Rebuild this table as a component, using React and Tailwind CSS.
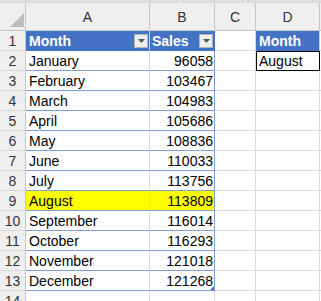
import React from 'react'

const months = [
  ['January', 96058],
  ['February', 103467],
  ['March', 104983],
  ['April', 105686],
  ['May', 108836],
  ['June', 110033],
  ['July', 113756],
  ['August', 113809],
  ['September', 116014],
  ['October', 116293],
  ['November', 121018],
  ['December', 121268],
]

function Dropdown() {
  return (
    <span className="ml-auto mr-[1px] w-[14px] h-[14px] bg-[#eeeeee] border border-[#b4b4b4] flex items-center justify-center">
      <svg width="7" height="4" viewBox="0 0 7 4">
        <path d="M0 0h7L3.5 4z" fill="#595959" />
      </svg>
    </span>
  )
}

function RowHead({ n }) {
  return (
    <div className="w-[26px] shrink-0 bg-[#efefef] border-r border-b border-r-[#c6c6c6] border-b-[#d8d8d8] flex items-center justify-center text-[#333]">
      {n}
    </div>
  )
}

function Gap({ w }) {
  return <div className={`${w} shrink-0 border-r border-b border-[#dadada]`} />
}

export default function App() {
  return (
    <div className="w-[321px] h-[301px] overflow-hidden bg-white text-[14px] leading-none text-black font-['Liberation_Sans',Arial,sans-serif]">
      <div className="h-[3px] bg-[#dcdcdc] flex">
        <div className="w-[180px] border-r border-[#f4f4f4]" />
        <div className="w-[66px] border-r border-[#f4f4f4]" />
      </div>

      <div className="flex h-[28px] bg-[#efefef] text-[#333]">
        <div className="w-[26px] shrink-0 border-r border-b border-[#c6c6c6] flex items-end justify-end pr-[1px] pb-[3px]">
          <svg width="14" height="14" viewBox="0 0 14 14">
            <path d="M14 0V14H0z" fill="#bdbdbd" />
          </svg>
        </div>
        <div className="w-[124px] shrink-0 border-r border-b border-[#c6c6c6] flex items-center justify-center">A</div>
        <div className="w-[65px] shrink-0 border-r border-b border-[#c6c6c6] flex items-center justify-center">B</div>
        <div className="w-[41px] shrink-0 border-r border-b border-[#c6c6c6] flex items-center justify-center">C</div>
        <div className="w-[64px] shrink-0 border-r border-b border-[#c6c6c6] flex items-center justify-center">D</div>
        <div className="flex-1 border-b border-[#c6c6c6]" />
      </div>

      <div className="flex h-[20px]">
        <RowHead n={1} />
        <div className="w-[124px] shrink-0 bg-[#4472c4] border-r border-b border-r-[#c3cfe6] border-b-[#4472c4] flex items-center pl-[3px] text-white font-bold">
          Month
          <Dropdown />
        </div>
        <div className="w-[65px] shrink-0 bg-[#4472c4] border-r border-b border-[#4472c4] flex items-center pl-[2px] text-white font-bold">
          Sales
          <Dropdown />
        </div>
        <Gap w="w-[41px]" />
        <div className="w-[64px] shrink-0 bg-[#4472c4] border-r border-b border-r-[#c3cfe6] border-b-[#4472c4] flex items-center pl-[3px] text-white font-bold">
          Month
        </div>
        <div className="flex-1 border-b border-[#dadada]" />
      </div>

      {months.map(([m, v], i) => {
        const hi = m === 'August'
        const last = i === months.length - 1
        return (
          <div key={m} className="flex h-[20px]">
            <RowHead n={i + 2} />
            <div className={`w-[124px] shrink-0 border-r border-b border-r-[#dadada] border-b-[#7f9fd6] flex items-center pl-[3px] ${hi ? 'bg-[#ffff00]' : ''}`}>
              {m}
            </div>
            <div className={`relative w-[65px] shrink-0 border-r border-b border-[#7f9fd6] flex items-center justify-end pr-[1px] ${hi ? 'bg-[#ffff00]' : ''}`}>
              {v}
              {last && (
                <svg className="absolute right-0 bottom-0" width="4" height="4" viewBox="0 0 4 4">
                  <path d="M4 0V4H0z" fill="#4472c4" />
                </svg>
              )}
            </div>
            <Gap w="w-[41px]" />
            {i === 0 ? (
              <div className="w-[64px] shrink-0 border-r border-b border-black outline outline-1 outline-black -outline-offset-1 flex items-center pl-[3px]">
                August
              </div>
            ) : (
              <Gap w="w-[64px]" />
            )}
            <div className="flex-1 border-b border-[#dadada]" />
          </div>
        )
      })}

      <div className="flex h-[20px]">
        <RowHead n={14} />
        <Gap w="w-[124px]" />
        <Gap w="w-[65px]" />
        <Gap w="w-[41px]" />
        <Gap w="w-[64px]" />
        <div className="flex-1 border-b border-[#dadada]" />
      </div>
    </div>
  )
}
